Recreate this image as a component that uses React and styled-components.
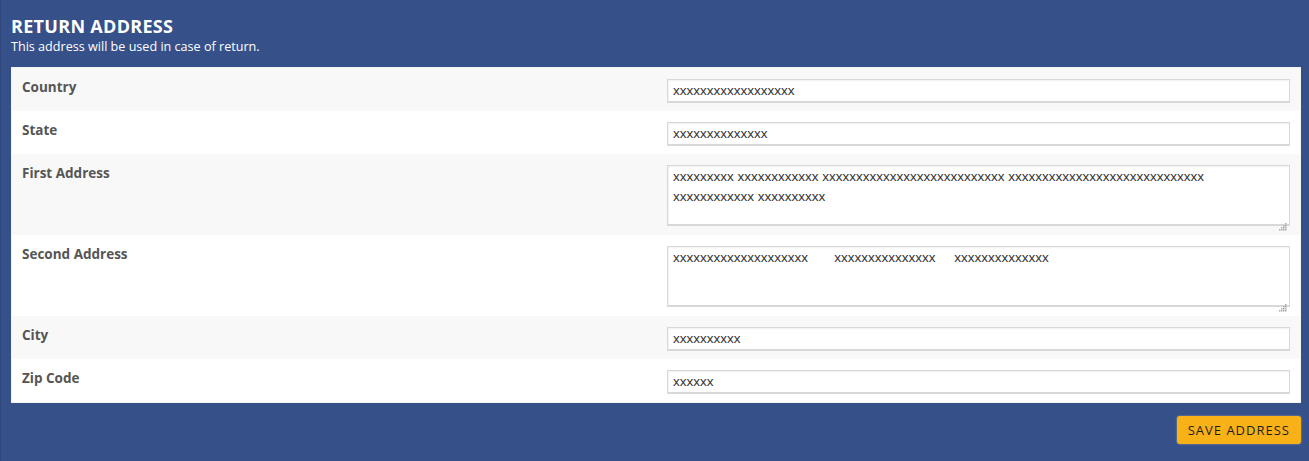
import React from "react";
import styled, { createGlobalStyle } from "styled-components";

const Global = createGlobalStyle`
  html, body { margin: 0; padding: 0; background: #36508a; }
  body { font-family: "Open Sans", "Liberation Sans", sans-serif; }
  * { box-sizing: border-box; }
`;

const Panel = styled.section`
  background: #36508a;
  border-left: 1px solid #2e4679;
  min-height: 461px;
  padding: 14px 8px 16px 10px;
`;

const Title = styled.h2`
  margin: 0;
  color: #fff;
  font-size: 18px;
  font-weight: 700;
  line-height: 24px;
  letter-spacing: 0.3px;
`;

const Subtitle = styled.p`
  margin: 0 0 11px;
  color: #fff;
  font-size: 12.6px;
  line-height: 18px;
`;

const Table = styled.div`
  background: #fff;
  border: 1px solid #f4f4f4;
  display: flex;
  flex-direction: column;
`;

const Row = styled.div`
  display: grid;
  grid-template-columns: 1fr 1fr;
  background: ${(p) => (p.$alt ? "#f8f8f8" : "#ffffff")};
  min-height: ${(p) => (p.$tall ? "81px" : "43px")};
`;

const Label = styled.div`
  padding: 10px 10px;
  font-size: 13.5px;
  font-weight: 700;
  line-height: 18px;
  color: #555;
`;

const Field = styled.div`
  position: relative;
  padding: 11px 10px 0 11px;
`;

const fieldBase = `
  display: block;
  width: 100%;
  background: #fff;
  border: 1px solid #d8d8d8;
  border-bottom-width: 2px;
  box-shadow: inset 1px 1px 2px rgba(0,0,0,0.06);
  font-family: "Liberation Sans", Arial, sans-serif;
  font-size: 13.5px;
  color: #333;
  outline: none;
  margin: 0;
`;

const Input = styled.input`
  ${fieldBase}
  height: 24px;
  padding: 0 5px;
`;

const TextArea = styled.textarea`
  ${fieldBase}
  height: 61px;
  padding: 1px 5px;
  line-height: 20px;
  resize: none;
  white-space: pre-wrap;
  overflow: hidden;
`;

const Grip = styled.svg`
  position: absolute;
  right: 13px;
  bottom: 4px;
  width: 9px;
  height: 9px;
`;

const Footer = styled.div`
  display: flex;
  justify-content: flex-end;
  padding-top: 13px;
`;

const Button = styled.button`
  background: #f8b116;
  border: none;
  border-radius: 3px;
  box-shadow: 0 0 2px rgba(255, 230, 150, 0.6);
  height: 28px;
  padding: 0 11px;
  font-family: "Open Sans", "Liberation Sans", sans-serif;
  font-size: 13px;
  letter-spacing: 1px;
  color: #1d1d1d;
  cursor: pointer;
`;

const ResizeGrip = () => (
  <Grip viewBox="0 0 9 9">
    {[
      [7, 0],
      [5, 2], [7, 2],
      [3, 4], [5, 4], [7, 4],
      [1, 6], [3, 6], [5, 6], [7, 6],
    ].map(([x, y]) => (
      <rect key={`${x}-${y}`} x={x} y={y + 1} width="1.5" height="1.5" fill="#a9a9a9" />
    ))}
  </Grip>
);

const rows = [
  { label: "Country", value: "xxxxxxxxxxxxxxxxxx" },
  { label: "State", value: "xxxxxxxxxxxxxx" },
  {
    label: "First Address",
    value:
      "xxxxxxxxx xxxxxxxxxxxx xxxxxxxxxxxxxxxxxxxxxxxxxxx xxxxxxxxxxxxxxxxxxxxxxxxxxxxx\nxxxxxxxxxxxx xxxxxxxxxx",
    tall: true,
  },
  {
    label: "Second Address",
    value: "xxxxxxxxxxxxxxxxxxxx       xxxxxxxxxxxxxxx     xxxxxxxxxxxxxx",
    tall: true,
  },
  { label: "City", value: "xxxxxxxxxx" },
  { label: "Zip Code", value: "xxxxxx" },
];

export default function App() {
  return (
    <>
      <Global />
      <Panel>
        <Title>RETURN ADDRESS</Title>
        <Subtitle>This address will be used in case of return.</Subtitle>
        <Table>
          {rows.map((r, i) => (
            <Row key={r.label} $alt={i % 2 === 0} $tall={r.tall}>
              <Label>{r.label}</Label>
              <Field>
                {r.tall ? (
                  <>
                    <TextArea defaultValue={r.value} />
                    <ResizeGrip />
                  </>
                ) : (
                  <Input defaultValue={r.value} />
                )}
              </Field>
            </Row>
          ))}
        </Table>
        <Footer>
          <Button>SAVE ADDRESS</Button>
        </Footer>
      </Panel>
    </>
  );
}
